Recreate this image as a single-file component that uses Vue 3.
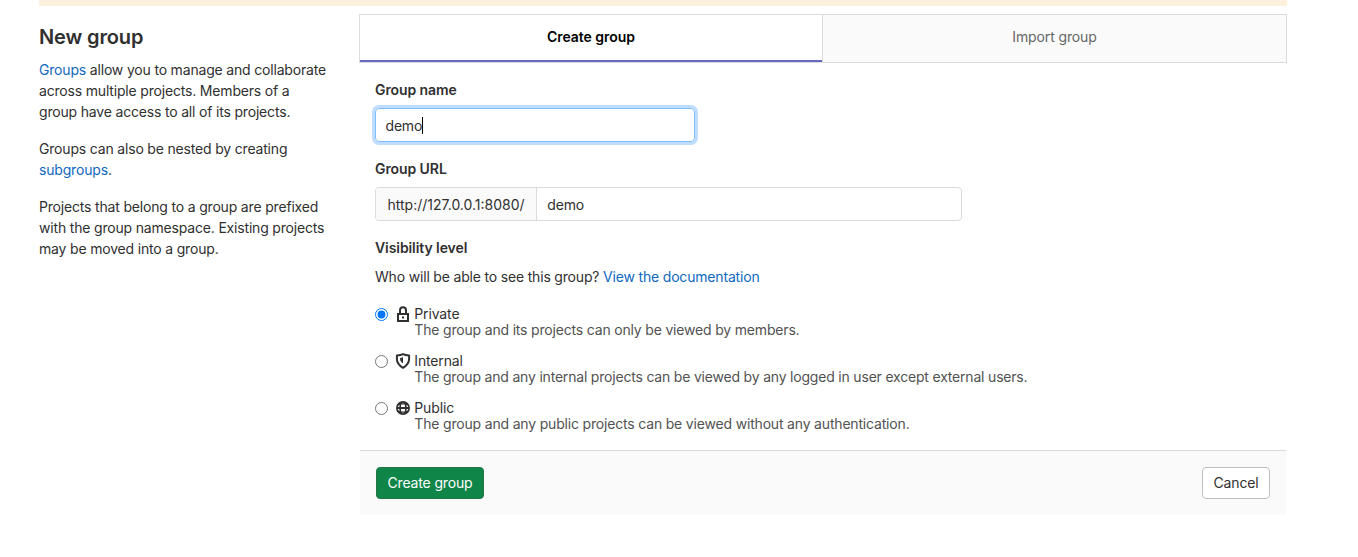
<script setup>
import { ref } from 'vue'

const groupName = ref('demo')
const groupPath = ref('demo')
const visibility = ref('private')

const levels = [
  { id: 'private', label: 'Private', help: 'The group and its projects can only be viewed by members.' },
  { id: 'internal', label: 'Internal', help: 'The group and any internal projects can be viewed by any logged in user except external users.' },
  { id: 'public', label: 'Public', help: 'The group and any public projects can be viewed without any authentication.' },
]
</script>

<template>
  <div class="page">
    <div class="alert-strip"></div>
    <div class="layout">
      <aside class="intro">
        <h4>New group</h4>
        <p><a>Groups</a> allow you to manage and collaborate<br>across multiple projects. Members of a<br>group have access to all of its projects.</p>
        <p>Groups can also be nested by creating<br><a>subgroups</a>.</p>
        <p>Projects that belong to a group are prefixed<br>with the group namespace. Existing projects<br>may be moved into a group.</p>
      </aside>

      <main class="panel">
        <nav class="tabs">
          <div class="tab active">Create group</div>
          <div class="tab">Import group</div>
        </nav>

        <form class="fields" @submit.prevent>
          <label class="title">Group name</label>
          <div class="control focused"><span>{{ groupName }}</span><i class="caret"></i></div>

          <label class="title">Group URL</label>
          <div class="url-group">
            <div class="prefix">http://127.0.0.1:8080/</div>
            <div class="path">{{ groupPath }}</div>
          </div>

          <label class="title">Visibility level</label>
          <p class="question">Who will be able to see this group? <a>View the documentation</a></p>

          <div v-for="level in levels" :key="level.id" class="level" :class="level.id">
            <input v-model="visibility" type="radio" name="visibility" :value="level.id">
            <svg v-if="level.id === 'private'" class="icon" viewBox="0 0 16 16">
              <path fill="none" stroke="currentColor" stroke-width="2" d="M3 8h10v7H3zM5 8V4.200a3 3 0 0 1 6 0V8" />
              <path fill="currentColor" d="M7 10.500h2v2H7z" />
            </svg>
            <svg v-else-if="level.id === 'internal'" class="icon" viewBox="0 0 16 16">
              <path fill="none" stroke="currentColor" stroke-width="2" stroke-linejoin="round" d="M8 1.200C6.300 2.200 4.200 2.500 1.900 2.500v3.600c0 3.700 2.100 6.500 6.100 8.700 4-2.200 6.100-5 6.100-8.700V2.500c-2.300 0-4.400-.3-6.100-1.300z" />
              <path fill="currentColor" d="M8 4v6.300C6.300 9.100 5.100 7.800 5.100 6.200V5C6.200 4.900 7.200 4.500 8 4z" />
            </svg>
            <svg v-else class="icon" viewBox="0 0 16 16">
              <circle cx="8" cy="8" r="7" fill="currentColor" />
              <path fill="#fff" d="M6.300 4.500h3.400q.3 1.200.3 2.500H6q0-1.300.3-2.500zM6 9h4q0 1.300-.3 2.500H6.300Q6 10.300 6 9zM4.700 4.700Q4.300 5.800 4.300 7H2.700q.3-1.300 2-2.300zM11.300 4.700q.4 1.100.4 2.300h1.600q-.3-1.300-2-2.300zM4.300 9q0 1.200.4 2.300Q3 10.300 2.700 9zM11.700 9q0 1.200-.4 2.300 1.700-1 2-2.300zM7 3.300q1-1.300 2 0zM7 12.700q1 1.300 2 0z" />
            </svg>
            <div class="level-text">
              <div class="level-name">{{ level.label }}</div>
              <div class="level-help">{{ level.help }}</div>
            </div>
          </div>
        </form>

        <footer class="actions">
          <button class="btn confirm" type="button">Create group</button>
          <button class="btn" type="button">Cancel</button>
        </footer>
      </main>
    </div>
  </div>
</template>

<style>
body {
  margin: 0;
  background: #fff;
}
</style>

<style scoped>
* {
  box-sizing: border-box;
}
.page {
  width: 1248px;
  height: 557px;
  margin-left: 39px;
  overflow: hidden;
  font-family: Inter, "Noto Sans", sans-serif;
  font-size: 14px;
  line-height: 21px;
  letter-spacing: -0.18px;
  color: #303030;
}
.alert-strip {
  height: 6px;
  background: #fdf1dd;
}
.layout {
  display: flex;
  padding-top: 8px;
}
.intro {
  width: 320px;
  padding-top: 10px;
  white-space: nowrap;
}
h4 {
  margin: 0 0 9px;
  font-size: 20px;
  font-weight: 600;
  line-height: 26px;
  letter-spacing: -0.13px;
}
p {
  margin: 0 0 16px;
}
a {
  color: #1068bf;
}
.panel {
  width: 928px;
}
.tabs {
  display: flex;
  height: 49px;
  border: 1px solid #dbdbdb;
}
.tab {
  width: 464px;
  padding-top: 11px;
  text-align: center;
  letter-spacing: -0.12px;
  color: #666;
  background: #fafafa;
  border-left: 1px solid #dbdbdb;
}
.tab.active {
  width: 462px;
  color: #000;
  font-weight: 600;
  letter-spacing: -0.03px;
  background: #fff;
  border-left: 0;
  border-bottom: 2px solid #6666c4;
}
.fields {
  height: 387px;
  padding: 16px 16px 0;
}
.title {
  display: block;
  margin-bottom: 8px;
  font-weight: 600;
  letter-spacing: -0.08px;
}
.control {
  display: flex;
  align-items: center;
  width: 320px;
  height: 34px;
  margin-bottom: 16px;
  padding: 0 9.5px;
  border: 1px solid #dbdbdb;
  border-radius: 4px;
}
.control.focused {
  border-color: #80bdff;
  box-shadow: 0 0 0 3px #bfdeff;
}
.caret {
  width: 1px;
  height: 17px;
  margin-left: -0.5px;
  background: #000;
}
.url-group {
  display: flex;
  width: 587px;
  height: 34px;
  margin: 8px 0 16px;
  line-height: 34px;
  border: 1px solid #dbdbdb;
  border-radius: 4px;
}
.prefix {
  width: 161px;
  padding-left: 11.5px;
  letter-spacing: 0;
  background: #fafafa;
  border-right: 1px solid #dbdbdb;
  border-radius: 3px 0 0 3px;
}
.path {
  padding-left: 10.3px;
}
.question {
  margin: 8px 0 18px;
}
.level {
  display: flex;
  height: 47px;
}
.level input {
  width: 13px;
  height: 13px;
  margin: 3px 8px 0 0;
}
.icon {
  width: 16px;
  height: 16px;
  margin: 1px 3px 0 -1px;
}
.level-text {
  line-height: 16px;
  padding: 1px 0 0 0.3px;
  white-space: nowrap;
}
.level-name {
  letter-spacing: -0.14px;
}
.level-help {
  color: #525252;
}
.internal .level-help {
  letter-spacing: -0.195px;
}
.actions {
  display: flex;
  justify-content: space-between;
  width: 926px;
  height: 65px;
  margin-left: 1px;
  padding: 16px;
  background: #fafafa;
  border-top: 1px solid #dbdbdb;
}
.btn {
  width: 68px;
  height: 32px;
  padding: 0 0 2px;
  font: inherit;
  letter-spacing: -0.16px;
  color: #303030;
  background: #fff;
  border: 1px solid #bfbfbf;
  border-radius: 4px;
}
.btn.confirm {
  width: 108px;
  color: #fff;
  background: #108548;
  border-color: #217645;
}
</style>
